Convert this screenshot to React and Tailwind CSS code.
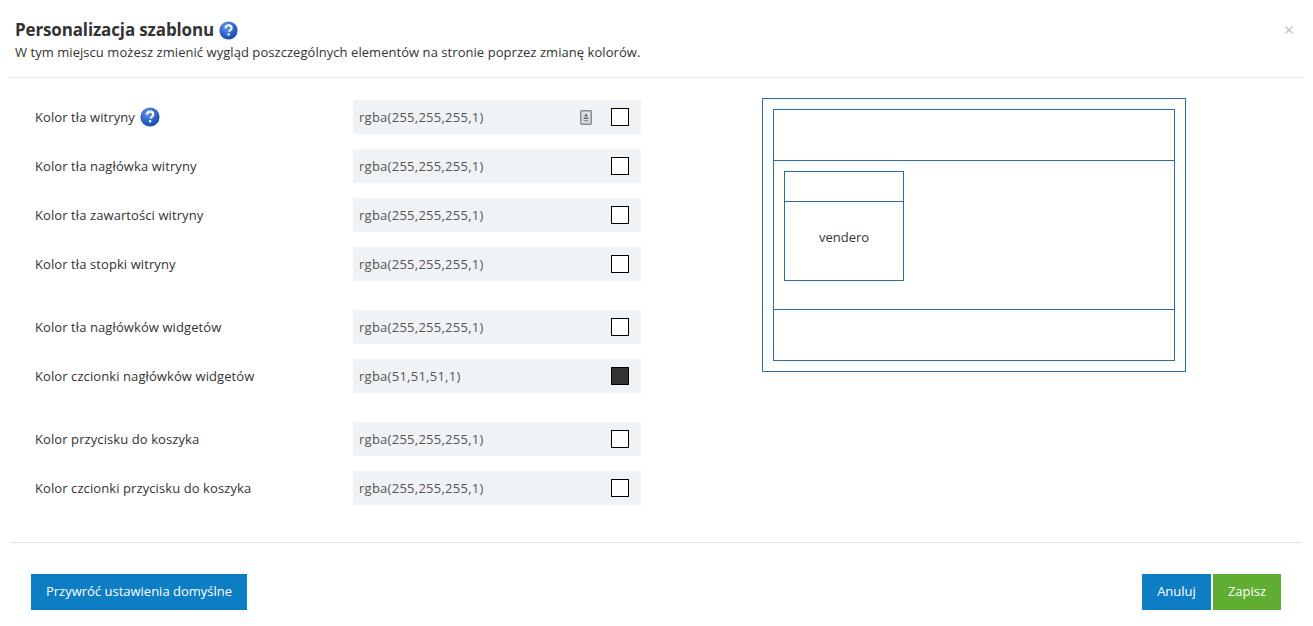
import { X } from "lucide-react"

const colorGroups = [
  [
    { id: "bg", label: "Kolor tła witryny", value: "rgba(255,255,255,1)", help: true, picker: true },
    { id: "header", label: "Kolor tła nagłówka witryny", value: "rgba(255,255,255,1)" },
    { id: "content", label: "Kolor tła zawartości witryny", value: "rgba(255,255,255,1)" },
    { id: "footer", label: "Kolor tła stopki witryny", value: "rgba(255,255,255,1)" },
  ],
  [
    { id: "widgetBg", label: "Kolor tła nagłówków widgetów", value: "rgba(255,255,255,1)" },
    { id: "widgetFont", label: "Kolor czcionki nagłówków widgetów", value: "rgba(51,51,51,1)", dark: true },
  ],
  [
    { id: "cartBg", label: "Kolor przycisku do koszyka", value: "rgba(255,255,255,1)" },
    { id: "cartFont", label: "Kolor czcionki przycisku do koszyka", value: "rgba(255,255,255,1)" },
  ],
]

function HelpIcon({ size }) {
  return (
    <svg width={size} height={size} viewBox="0 0 20 20" className="shrink-0">
      <defs>
        <radialGradient id="helpBg" cx="40%" cy="30%" r="75%">
          <stop offset="0%" stopColor="#6d9be8" />
          <stop offset="55%" stopColor="#2f67cc" />
          <stop offset="100%" stopColor="#1c47a0" />
        </radialGradient>
      </defs>
      <circle cx="10" cy="10" r="9.6" fill="url(#helpBg)" />
      <path
        d="M6.9 7.6c0-1.9 1.4-3 3.2-3 1.9 0 3.2 1.1 3.2 2.7 0 1.2-.7 1.9-1.5 2.5-.7.5-1 .8-1 1.6"
        fill="none"
        stroke="#fff"
        strokeWidth="2.1"
      />
      <rect x="9" y="13" width="2.2" height="2.3" fill="#fff" />
    </svg>
  )
}

function PickerIcon() {
  return (
    <svg width="12" height="15" viewBox="0 0 12 15" className="shrink-0">
      <rect x="0.75" y="0.75" width="10.5" height="13.5" rx="1" fill="#dfe2e4" stroke="#868b8d" strokeWidth="1.5" />
      <path d="M6 3.2 8 6.4H4z" fill="#666" />
      <rect x="3.5" y="7.5" width="5" height="1.5" fill="#666" />
      <rect x="3.5" y="10" width="5" height="1.5" fill="#999" />
    </svg>
  )
}

function ColorRow({ row }) {
  return (
    <div className="flex items-center">
      <div className="flex w-[353px] items-center gap-[5px] pl-[35px] tracking-[0.09px]">
        <span className="pt-[2px]">{row.label}</span>
        {row.help && <HelpIcon size={20} />}
      </div>
      <div className="flex h-[34px] w-[288px] items-center bg-[#eff3f6]">
        <span className="flex-1 pl-[6px] pt-[1px] tracking-[0.26px] text-[#555]">{row.value}</span>
        {row.picker && <PickerIcon />}
        <div className="ml-[19px] mr-[12px] flex h-full items-center">
          <div className={`h-[18px] w-[18px] border border-black ${row.dark ? "bg-[#333333]" : "bg-white"}`} />
        </div>
      </div>
    </div>
  )
}

function Preview() {
  return (
    <div className="ml-[121px] mt-[-2px] h-[274px] w-[424px] border border-[#2a6ca5] p-[10px]">
      <div className="flex h-[252px] flex-col border border-[#2a6ca5]">
        <div className="h-[51px] border-b border-[#2a6ca5]" />
        <div className="flex-1 p-[10px]">
          <div className="flex h-[110px] w-[120px] flex-col border border-[#2a6ca5]">
            <div className="h-[30px] border-b border-[#2a6ca5]" />
            <div className="flex flex-1 items-center justify-center pb-[6px]">vendero</div>
          </div>
        </div>
        <div className="h-[51px] border-t border-[#2a6ca5]" />
      </div>
    </div>
  )
}

export default function App() {
  return (
    <div className="relative h-[626px] w-[1313px] overflow-hidden bg-white font-['Open_Sans',sans-serif] text-[13px] text-[#333]">
      <header className="ml-[10px] mr-[11px] h-[78px] border-b border-[#e5e5e5] pl-[5px] pt-[19px]">
        <div className="flex h-[22px] items-center gap-[5px]">
          <h1 className="text-[17px] font-bold tracking-[-0.14px] text-[#333]">Personalizacja szablonu</h1>
          <HelpIcon size={19} />
        </div>
        <p className="mt-[2px] tracking-[0.05px] text-[#333]">W tym miejscu możesz zmienić wygląd poszczególnych elementów na stronie poprzez zmianę kolorów.</p>
      </header>
      <X className="absolute right-[18px] top-[24px] h-3 w-3 text-[#c4c9ce]" strokeWidth={3.5} />

      <main className="flex h-[464px] items-start pt-[22px]">
        <div className="flex flex-col gap-[29px]">
          {colorGroups.map((group, i) => (
            <div key={i} className="flex flex-col gap-[15px]">
              {group.map((row) => (
                <ColorRow key={row.id} row={row} />
              ))}
            </div>
          ))}
        </div>
        <Preview />
      </main>

      <footer className="ml-[10px] mr-[11px] flex items-start justify-between border-t border-[#e5e5e5] pl-[21px] pr-[21px] pt-[31px]">
        <button className="h-[36px] w-[216px] bg-[#0d7dc4] text-white">Przywróć ustawienia domyślne</button>
        <div className="flex gap-[2px]">
          <button className="h-[36px] w-[69px] bg-[#0d7dc4] text-white">Anuluj</button>
          <button className="h-[36px] w-[68px] bg-[#5fae32] text-white">Zapisz</button>
        </div>
      </footer>
    </div>
  )
}
